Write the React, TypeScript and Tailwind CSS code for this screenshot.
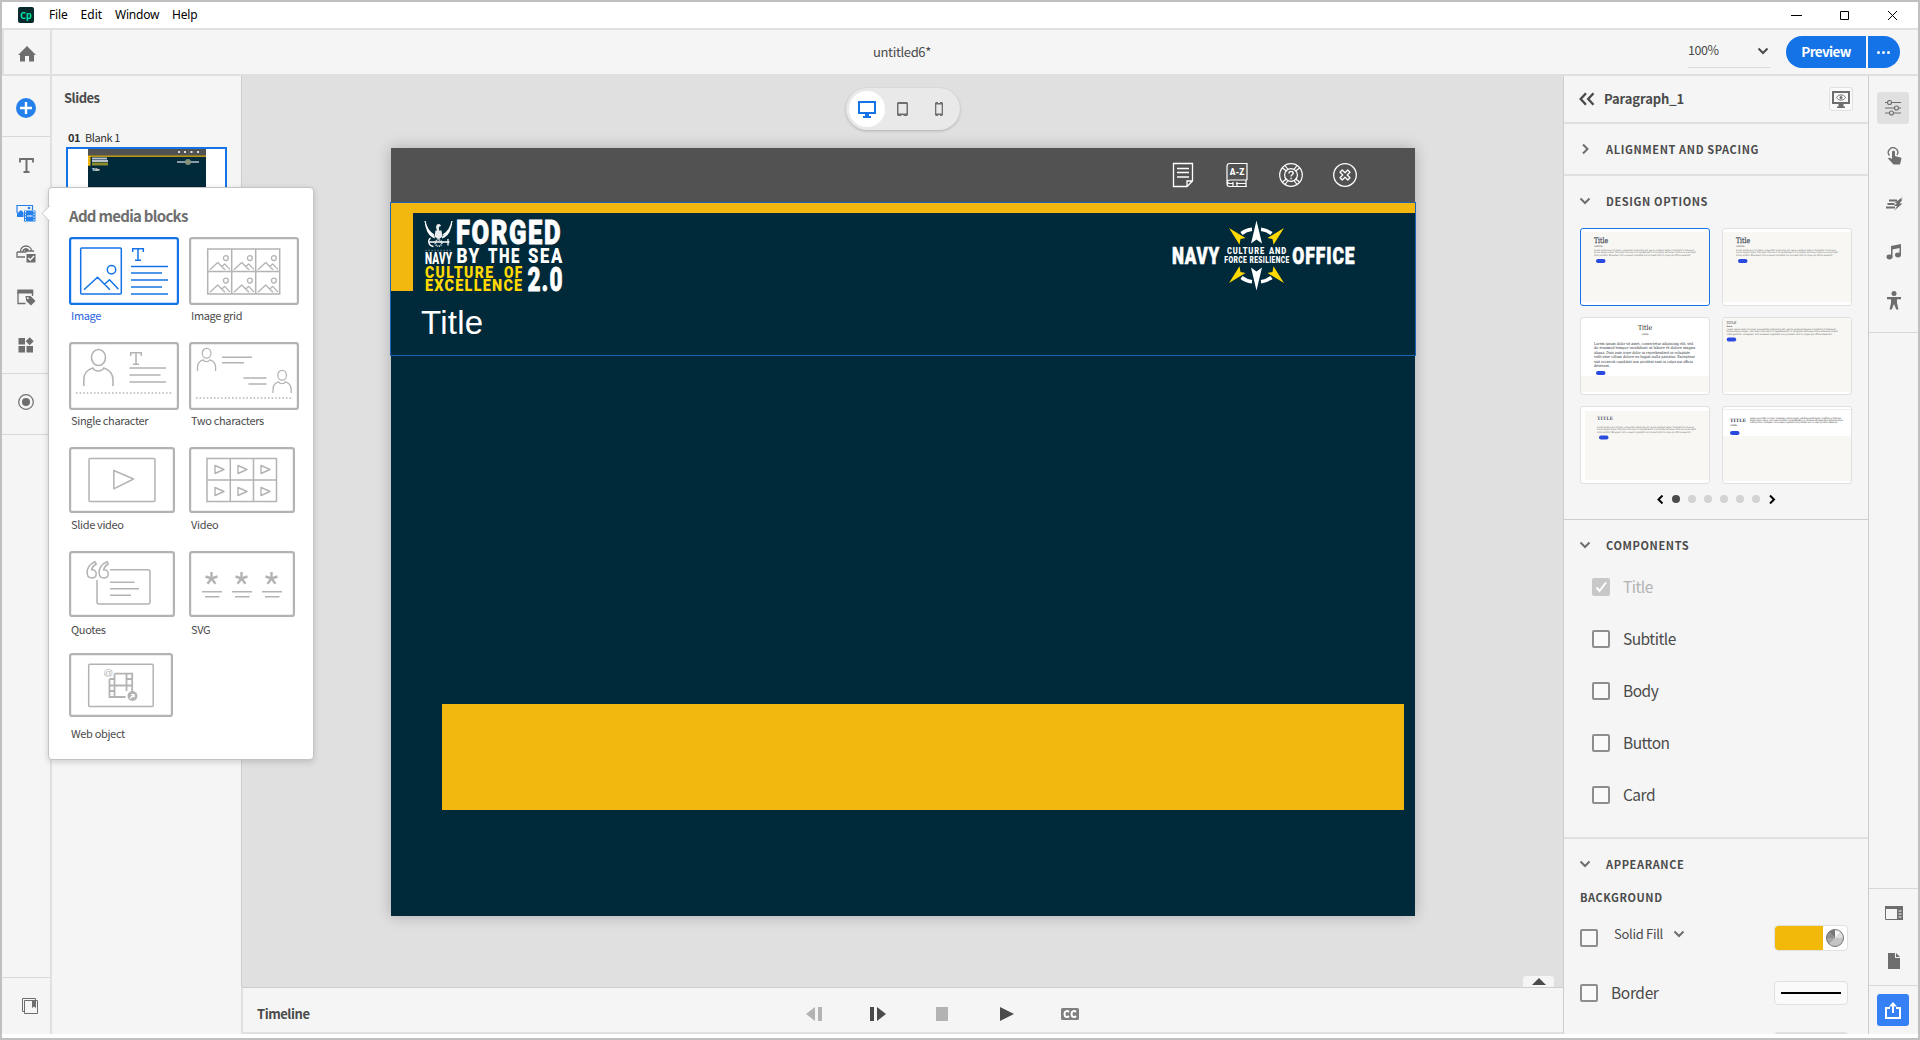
import type { ReactNode } from "react";

const LOREM = [
  "Lorem ipsum dolor sit amet, consectetur adipiscing elit, sed do eiusmod tempor incididunt ut labore et",
  "dolore magna aliqua. Duis aute irure dolor in reprehenderit in voluptate velit esse cillum dolore eu fugiat",
  "nulla pariatur. Excepteur sint occaecat cupidatat non proident sunt in culpa qui officia deserunt.",
];

const LOREM_WIDE = [
  "Lorem ipsum dolor sit amet, consectetur adipiscing elit, sed",
  "do eiusmod tempor incididunt ut labore et dolore magna",
  "aliqua. Duis aute irure dolor in reprehenderit in voluptate",
  "velit esse cillum dolore eu fugiat nulla pariatur. Excepteur",
  "sint occaecat cupidatat non proident sunt in culpa qui officia",
  "deserunt.",
];

/* ---------- Small shared pieces ---------- */

function Chevron({ dir = "down", color = "#6e6e6e" }: { dir?: "down" | "right"; color?: string }) {
  return (
    <svg width="12" height="12" viewBox="0 0 12 12" fill="none" stroke={color} strokeWidth="2">
      {dir === "down" ? <path d="M1.5 3.5 6 8l4.500-4.500" /> : <path d="M4 1.500 8.500 6 4 10.500" />}
    </svg>
  );
}

function SectionTitle({ children, dir = "down" }: { children: ReactNode; dir?: "down" | "right" }) {
  return (
    <div className="flex h-4 items-center gap-[15px] pl-[15px]">
      <Chevron dir={dir} />
      <span className="text-[11px] leading-4 font-bold tracking-[0.62px] whitespace-nowrap text-[#4b4b4b]">{children}</span>
    </div>
  );
}

function Check({ on = false }: { on?: boolean }) {
  return on ? (
    <span className="flex size-[18px] items-center justify-center rounded-[2px] bg-[#c8c8c8]">
      <svg width="14" height="14" viewBox="0 0 14 14" fill="none" stroke="#fff" strokeWidth="2">
        <path d="M2.500 7.500 5.500 11 12 2.500" />
      </svg>
    </span>
  ) : (
    <span className="size-[18px] rounded-[2px] border-2 border-[#8e8e8e] bg-[#fafafa]" />
  );
}

/* ---------- Media block thumbnails ---------- */

const G = "#b3b3b3";

function Mountain({ x, y, s = 1, color = G, w = 1.5 }: { x: number; y: number; s?: number; color?: string; w?: number }) {
  return (
    <g transform={`translate(${x} ${y}) scale(${s})`} fill="none" stroke={color} strokeWidth={w / s} strokeLinejoin="round" strokeLinecap="round">
      <path d="M0 24 13 12 25 24M20 19l5-4.500 8.500 9" />
      <circle cx="27" cy="4.500" r="4.200" />
    </g>
  );
}

function Person({ x, y, s = 1 }: { x: number; y: number; s?: number }) {
  return (
    <g transform={`translate(${x} ${y}) scale(${s})`} fill="none" stroke={G} strokeWidth={1.6 / Math.sqrt(s)}>
      <ellipse cx="15.500" cy="8.500" rx="7" ry="8" />
      <path d="M.8 37v-6c0-7 3-10 9-12 2 4 9 4 11 0 6 2 9.200 5 9.200 12v6" />
    </g>
  );
}

function Serif({ x, y, color = G }: { x: number; y: number; color?: string }) {
  return <path transform={`translate(${x} ${y})`} d="M.7 4V.7h10.600V4M6 .7v11.600M3 12.300h6" fill="none" stroke={color} strokeWidth="1.5" />;
}

function Frame({ w, h, color = G, children }: { w: number; h: number; color?: string; children: ReactNode }) {
  return (
    <svg width={w} height={h} viewBox={`0 0 ${w} ${h}`} className="block">
      <rect x="1.100" y="1.100" width={w - 2.2} height={h - 2.2} rx="2" fill="#fff" stroke={color} strokeWidth="2.200" />
      {children}
    </svg>
  );
}

const BLUE = "#1473e6";

function ImageThumb() {
  return (
    <Frame w={110} h={68} color={BLUE}>
      <rect x="11.700" y="11" width="40.600" height="46" rx="1" fill="none" stroke={BLUE} strokeWidth="1.500" />
      <Mountain x={15.5} y={28.300} color={BLUE} />
      <Serif x={63} y={11} color={BLUE} />
      <path d="M62 29.500h37M62 36h31M62 43h37M62 50h31M62 57h37" stroke={BLUE} strokeWidth="1.500" />
    </Frame>
  );
}

function ImageGridThumb() {
  return (
    <Frame w={110} h={68}>
      <path d="M18.700 12h72v45h-72zM18.700 34.500h72M42.700 12v45M66.700 12v45" fill="none" stroke={G} strokeWidth="1.500" />
      {[12, 34.5].map((y) => [18.7, 42.7, 66.7].map((x) => <Mountain key={`${x}-${y}`} x={x + 2.500} y={y + 6.500} s={0.58} w={1.3} />))}
    </Frame>
  );
}

function SingleThumb() {
  return (
    <Frame w={110} h={68}>
      <Person x={14} y={7} />
      <Serif x={61} y={10} />
      <path d="M60.500 26h36.500M60.500 33h31M60.500 40h36.500" stroke={G} strokeWidth="1.500" />
      <path d="M7 51h97" stroke={G} strokeWidth="1.300" strokeDasharray="1.500 2.100" />
    </Frame>
  );
}

function TwoThumb() {
  return (
    <Frame w={110} h={68}>
      <Person x={8} y={6} s={0.62} />
      <Person x={83.500} y={28} s={0.62} />
      <path d="M33 15.200h30M33 20.700h22M54.500 36h23M59.500 42h18" stroke={G} strokeWidth="1.500" />
      <path d="M7 56h97" stroke={G} strokeWidth="1.300" strokeDasharray="1.500 2.100" />
    </Frame>
  );
}

function SlideVideoThumb() {
  return (
    <Frame w={106} h={66}>
      <rect x="20" y="11.500" width="66" height="43" rx="1" fill="none" stroke={G} strokeWidth="1.500" />
      <path d="M44.800 23.500 64.500 32 44.800 41.800z" fill="none" stroke={G} strokeWidth="1.500" strokeLinejoin="round" />
    </Frame>
  );
}

function VideoThumb() {
  return (
    <Frame w={106} h={66}>
      <path d="M18 11.500h69.500v43H18zM18 33h69.500M41.300 11.500v43M64.500 11.500v43" fill="none" stroke={G} strokeWidth="1.500" />
      {[22, 44].map((y) =>
        [26, 49, 72].map((x) => (
          <path key={`${x}-${y}`} d={`M${x} ${y - 3.500}l9 4-9 4z`} fill="none" stroke={G} strokeWidth="1.400" strokeLinejoin="round" />
        )),
      )}
    </Frame>
  );
}

function QuotesThumb() {
  return (
    <Frame w={106} h={66}>
      <path d="M41 18.700h38a2 2 0 0 1 2 2V51a2 2 0 0 1-2 2H30a2 2 0 0 1-2-2V29" fill="none" stroke={G} strokeWidth="1.500" />
      {[18, 30].map((x) => (
        <path
          key={x}
          transform={`translate(${x} 10)`}
          d="M8 .8C2 3.500-.2 8 .2 12.500c.3 3 2 4.500 4.600 4.500s4.400-1.800 4.400-4.300S7.500 8.500 4.600 8.800C5 6.500 6.500 4.500 9.200 3z"
          fill="none"
          stroke={G}
          strokeWidth="1.500"
        />
      ))}
      <path d="M41 31.200h24.500M41 37.700h29M41 44.300h21" stroke={G} strokeWidth="1.500" />
    </Frame>
  );
}

function SvgThumb() {
  return (
    <Frame w={106} h={66}>
      {[22.500, 52.500, 82.500].map((x) => (
        <g key={x} transform={`translate(${x} 27)`} stroke={G}>
          <path d="M0 .5V-6M0 .5-6-1.500M0 .5 6-1.500M0 .5l-4 5.200M0 .5l4 5.200" strokeWidth="2.400" />
          <path d="M-9.500 13.700h20M-6.500 18.700H8" strokeWidth="1.500" />
        </g>
      ))}
    </Frame>
  );
}

function WebThumb() {
  return (
    <Frame w={104} h={64}>
      <rect x="19.700" y="11.300" width="64.500" height="42.200" rx="1" fill="none" stroke={G} strokeWidth="1.500" />
      <path d="M40.500 26v18h16M45.500 20.700h17.700V40M45.500 20.700V44M57.500 20.700V38M40.500 32.500h23M40.500 26h5M40.500 38h5M57.500 26h6" fill="none" stroke={G} strokeWidth="1.800" />
      <circle cx="63.500" cy="43" r="5" fill={G} />
      <path d="m61 45.500 4-4m-3 0h3v3" fill="none" stroke="#fff" strokeWidth="1.200" />
      <text x="34.500" y="22.500" fontSize="9.500" fill={G} fontFamily="Liberation Sans">@</text>
    </Frame>
  );
}

function Block({ label, active = false, children }: { label: string; active?: boolean; children: ReactNode }) {
  return (
    <div className="flex w-[110px] flex-col">
      {children}
      <span className={`mt-auto mb-[2px] pl-[2px] text-[11px] leading-4 tracking-[-0.34px] whitespace-nowrap ${active ? "text-[#2a62e0]" : "text-[#4b4b4b]"}`}>{label}</span>
    </div>
  );
}

function MediaPopup() {
  return (
    <div className="absolute top-[185px] left-[46px] z-20 h-[573px] w-[266px] rounded-[4px] border border-[#c4c4c4] bg-white pl-5 shadow-[0_2px_6px_rgba(0,0,0,0.16)]">
      <svg className="absolute top-[17px] -left-[8px]" width="9" height="17" viewBox="0 0 9 17">
        <path d="M9 .5 1 8.500l8 8" fill="#fff" stroke="#c4c4c4" />
      </svg>
      <h2 className="mt-[18px] h-[31px] text-[15px] leading-5 font-bold tracking-[-0.72px] whitespace-nowrap text-[#6e6e6e]">Add media blocks</h2>
      <div className="grid grid-cols-[110px_110px] grid-rows-[88px_88px_87px_88px_87px] gap-x-[10px] gap-y-[17px]">
        <Block label="Image" active><ImageThumb /></Block>
        <Block label="Image grid"><ImageGridThumb /></Block>
        <Block label="Single character"><SingleThumb /></Block>
        <Block label="Two characters"><TwoThumb /></Block>
        <Block label="Slide video"><SlideVideoThumb /></Block>
        <Block label="Video"><VideoThumb /></Block>
        <Block label="Quotes"><QuotesThumb /></Block>
        <Block label="SVG"><SvgThumb /></Block>
        <div className="-mt-[3px] flex h-[90px]"><Block label="Web object"><WebThumb /></Block></div>
      </div>
    </div>
  );
}

/* ---------- Logos ---------- */

const BLOCK_FONT = { fontFamily: "Roboto, 'Liberation Sans', sans-serif", fontWeight: 900 } as const;

function Word({ x, y, w, size, fill = "#fff", stroke = 0, gap = 1, children }: { x: number; y: number; w: number; size: number; fill?: string; stroke?: number; gap?: number; children: string }) {
  return (
    <text x={x} y={y} textLength={w + gap} lengthAdjust="spacingAndGlyphs" fontSize={size} letterSpacing={gap} fill={fill} stroke={fill} strokeWidth={stroke} style={BLOCK_FONT}>
      {children}
    </text>
  );
}

function ForgedLogo() {
  return (
    <svg width="140" height="74" viewBox="0 0 140 74" className="block overflow-visible">
      <g fill="none" stroke="#fff">
        <path d="M1 1c1 6 4 11 9 14M1.500 4c1 6 4 10 9 13M3 9c1 4 4 7 8 9M28 1c-1 6-4 11-9 14M27.500 4c-1 6-4 10-9 13M26 9c-1 4-4 7-8 9" strokeWidth="1.300" />
        <path d="M4.500 22h21M6.500 18c-3.500 3-1.500 8 3 8.500M24 19v6.500" strokeWidth="1.300" />
      </g>
      <path d="M12 7.500c0-4 4-4.500 5-1.500l-2 1v3.500h2.500l1 6-4 3-4-3 1-6h1.500z" fill="#fff" opacity=".9" />
      <circle cx="14.500" cy="23" r="3.200" fill="none" stroke="#fff" strokeWidth="1.800" strokeDasharray="1 .7" opacity=".8" />
      <path d="M1.500 30.500h27" stroke="#fff" strokeWidth="1.500" strokeDasharray="1.200 1.800" opacity=".4" />
      <Word x={1} y={43.700} w={27} size={16.800} gap={0.3}>NAVY</Word>
      <Word x={32} y={24} w={104} size={33} stroke={0.8} gap={2}>FORGED</Word>
      <Word x={32.500} y={43.300} w={22.500} size={19.700} gap={1.500}>BY</Word>
      <Word x={64} y={43.300} w={31} size={19.700} gap={2}>THE</Word>
      <Word x={104} y={43.300} w={34} size={19.700} gap={2}>SEA</Word>
      <Word x={1} y={58} w={68} size={16} gap={1.600} fill="#ffd900">CULTURE</Word>
      <Word x={80} y={58} w={18} size={16} gap={1.500} fill="#ffd900">OF</Word>
      <Word x={1} y={71} w={97} size={16} gap={1.400} fill="#ffd900">EXCELLENCE</Word>
      <Word x={103.500} y={70.500} w={34.500} size={33.500} stroke={0.8} gap={1.500}>2.0</Word>
    </svg>
  );
}

function OfficeLogo() {
  return (
    <svg width="184" height="74" viewBox="0 0 184 74" className="block overflow-visible">
      {[false, true].map((flip) => (
        <g key={String(flip)} transform={flip ? "translate(0 71) scale(1 -1)" : undefined}>
          <path d="M84.500 .5 90 23.500 84.500 19.500 79 23.500z" fill="#fff" />
          <path d="M57 8 73.500 18 68.500 19 67.500 24.800zM112 8 95.500 18l5 1 1 5.800z" fill="#ffd900" />
          <path d="M69.500 13.500Q74 10 80 9.300M99.500 13.500Q95 10 89 9.300" fill="none" stroke="#fff" strokeWidth="3.500" />
        </g>
      ))}
      <Word x={0} y={44.300} w={47} size={23} stroke={0.6} gap={1}>NAVY</Word>
      <Word x={55} y={34.300} w={37} size={9} gap={1}>CULTURE</Word>
      <Word x={97} y={34.300} w={17} size={9} gap={1}>AND</Word>
      <Word x={52.300} y={43} w={22.500} size={9} gap={0.500}>FORCE</Word>
      <Word x={77.500} y={43} w={39.500} size={9} gap={0.500}>RESILIENCE</Word>
      <Word x={120.300} y={44.300} w={62} size={23} stroke={0.6} gap={1.200}>OFFICE</Word>
    </svg>
  );
}

/* ---------- Slide ---------- */

function SlideToolbar() {
  return (
    <div className="flex h-[54px] items-center gap-[29px] bg-[#525252] pl-[780px]">
      <svg width="24" height="26" viewBox="0 0 24 26" fill="none" stroke="#fff" strokeWidth="1.300">
        <path d="M2.500 1.500h19v17.500l-5.500 5.500H2.500zM16 24v-5h5.500M6 6.500h12M6 10.500h12M6 15h12" />
      </svg>
      <svg width="26" height="26" viewBox="0 0 26 26" fill="none" stroke="#fff" strokeWidth="1.200">
        <path d="M23 18V1.500H5.500c-1.500 0-2.500 1-2.500 3v17c0 2 1 3 2.500 3H23M23 18H6c-3.500 0-3.500 3.500 0 3.500h3M12 21.500h10M22 18v6M9 20v5M13 20v5" />
        <text x="5.800" y="12.800" fontSize="8.500" fill="#fff" stroke="none" textLength="14.500" lengthAdjust="spacingAndGlyphs" style={BLOCK_FONT}>A-Z</text>
      </svg>
      <svg width="26" height="26" viewBox="0 0 26 26" fill="none" stroke="#fff" strokeWidth="1.200" className="-ml-px">
        <circle cx="13" cy="13" r="11.300" />
        <circle cx="13" cy="13" r="6.400" />
        <path d="m4.500 6 4.200 3.300M7 3.500l3 4M21.500 6l-4.200 3.300M19 3.500l-3 4M4.500 20l4.200-3.300M7 22.500l3-4M21.500 20l-4.200-3.300M19 22.500l-3-4" />
        <path d="M11 11.500c0-2.800 4.200-2.800 4.200-.2 0 1.500-2.100 1.500-2.100 3.200M13.100 15.700v1.600" strokeWidth="1.400" />
      </svg>
      <svg width="26" height="26" viewBox="0 0 26 26" fill="none" stroke="#fff" strokeWidth="1.300" className="-ml-px">
        <circle cx="13" cy="13" r="11.300" />
        <path d="m10.200 8 2.800 2.800L15.800 8 18 10.200 15.200 13l2.800 2.800-2.200 2.200-2.800-2.800-2.800 2.800L8 15.800l2.800-2.800L8 10.200z" strokeLinejoin="round" />
      </svg>
    </div>
  );
}

function Slide() {
  return (
    <div className="mt-[18px] ml-[149px] h-[768px] w-[1024px] bg-[#00293a] shadow-[0_0_14px_rgba(0,0,0,0.24)]">
      <SlideToolbar />
      <div className="-ml-px h-[154px] w-[1026px] border border-[#1a63b5]">
        <div className="h-[10px] bg-[#f2b80f]" />
        <div className="flex">
          <div className="h-[78px] w-[22px] bg-[#f2b80f]" />
          <div className="mt-[7px] ml-[11px]"><ForgedLogo /></div>
          <div className="mt-[7px] ml-[608px]"><OfficeLogo /></div>
        </div>
        <div className="mt-[11px] ml-[30px] font-['Liberation_Sans',Arial,sans-serif] text-[33px] leading-9 tracking-[0.25px] text-white">Title</div>
      </div>
      <div className="mt-[348px] ml-[51px] h-[106px] w-[962px] bg-[#f2b80f]" />
    </div>
  );
}

function DeviceSwitch() {
  return (
    <div className="mt-3 ml-[604px] flex h-[42px] w-[114px] items-center rounded-full bg-[#e9e9e9] pl-[3px] shadow-[0_1px_3px_rgba(0,0,0,0.22)]">
      <div className="flex size-9 items-center justify-center rounded-full bg-white">
        <svg width="18" height="18" viewBox="0 0 18 18" fill={BLUE}>
          <path fillRule="evenodd" d="M0 1h18v13h-7v2h2v2H5v-2h2v-2H0zM2 3v9h14V3z" />
        </svg>
      </div>
      <svg className="ml-3" width="11" height="14" viewBox="0 0 11 14">
        <path fillRule="evenodd" fill="#6e6e6e" d="M1 0h9l1 1v12l-1 1H6.500v-1h-2v1H1l-1-1V1zM1.500 2v9.500h8V2z" />
      </svg>
      <svg className="ml-[27px]" width="8" height="14" viewBox="0 0 8 14">
        <path fillRule="evenodd" fill="#6e6e6e" d="M1 0h2v1h2V0h2l1 1v12l-1 1H5v-1H3v1H1l-1-1V1zM1.300 2.500v9h5.400v-9z" />
      </svg>
    </div>
  );
}

/* ---------- Left side ---------- */

function LeftRail() {
  return (
    <nav className="flex w-[50px] flex-col border-r-2 border-[#e0e0e0] bg-[#f5f5f5]">
      <div className="flex h-[61px] items-center justify-center border-b border-[#d8d8d8] pt-1">
        <svg width="20" height="20" viewBox="0 0 20 20"><circle cx="10" cy="10" r="10" fill="#2680eb" /><path d="M10 4v12M4 10h12" stroke="#fff" strokeWidth="2.400" /></svg>
      </div>
      <div className="flex h-14 items-center justify-center">
        <svg width="15" height="15" viewBox="0 0 15 15" fill="none" stroke="#6e6e6e"><path d="M1 4.500V1h13v3.500" strokeWidth="1.800" /><path d="M7.500 1v13M4.500 14h6" strokeWidth="2" /></svg>
      </div>
      <div className="flex h-10 items-center justify-center">
        <svg width="20" height="18" viewBox="0 0 20 18">
          <path d="M1 9V1.500h15.500V6" fill="none" stroke="#2680eb" strokeWidth="1.200" />
          <path d="M1 9.500 5 6l2.500 2.500V13H1z" fill="#2680eb" />
          <circle cx="13" cy="4" r="1.300" fill="#2680eb" />
          <rect x="8" y="6.500" width="11.500" height="11" fill="#2680eb" />
          <path d="M9.500 7v10M18 7v10" stroke="#fff" strokeWidth="1" strokeDasharray="1.500 1.200" />
          <path d="M11 12h5.500" stroke="#fff" strokeWidth="1" />
        </svg>
      </div>
      <div className="flex h-[42px] items-center justify-center">
        <svg width="20" height="18" viewBox="0 0 20 18" fill="none" stroke="#6e6e6e" strokeWidth="1.300">
          <path d="M4.500 6.500C4.500 3 7 1 10 1s5.500 2 5.500 5M7 7c0-2 1.300-3 3-3s2.500 1 2.500 2.500M1 7h9.500M1 7v5h8M18 6H10" />
          <circle cx="10" cy="4.800" r="1" fill="#6e6e6e" />
          <rect x="10.500" y="9" width="9" height="8.500" fill="#6e6e6e" stroke="none" />
          <path d="m12.300 13 2 2 3.700-4" stroke="#fff" />
        </svg>
      </div>
      <div className="flex h-11 items-center justify-center">
        <svg width="20" height="18" viewBox="0 0 20 18">
          <path d="M2 4v11.500h7.500M16.500 4v4" fill="none" stroke="#6e6e6e" strokeWidth="1.300" /><path d="M1.300 1.500h16v4h-16z" fill="#6e6e6e" />
          <path d="M9.500 8h5l5 5-4.500 4.500L10.200 13z" fill="#6e6e6e" /><circle cx="11.800" cy="10.200" r=".9" fill="#fff" />
        </svg>
      </div>
      <div className="flex h-[54px] items-center justify-center pb-0.5">
        <svg width="16" height="16" viewBox="0 0 16 16" fill="#6e6e6e"><path d="M.5 1h6.500v6.500H.5zM.5 9H7v6.500H.5zM8.500 9H15v6.500H8.500zM11.700.2 15.700 4.200 11.700 8.200 7.700 4.200z" /></svg>
      </div>
      <div className="flex h-[62px] items-center justify-center border-y border-[#d8d8d8] pb-1">
        <svg width="16" height="16" viewBox="0 0 16 16"><circle cx="8" cy="8" r="7.300" fill="none" stroke="#6e6e6e" strokeWidth="1.200" /><circle cx="8" cy="8" r="4" fill="#6e6e6e" /></svg>
      </div>
      <div className="mt-auto flex h-[57px] items-center justify-center border-t border-[#d8d8d8] pl-2">
        <svg width="16" height="16" viewBox="0 0 16 16" fill="none" stroke="#6e6e6e"><path d="M2 13.500H.5V.5h13V2" /><path d="M2.500 2.500h13v13h-13z" /><path d="M10 2.500h4V10l-2-1.500L10 10z" fill="#6e6e6e" stroke="none" /></svg>
      </div>
    </nav>
  );
}

function SlidesPanel() {
  return (
    <aside className="w-[190px] border-r border-[#cdcdcd] bg-[#f5f5f5]">
      <h2 className="mt-[14px] ml-3 text-[13px] leading-4 font-bold tracking-[-0.5px] text-[#4b4b4b]">Slides</h2>
      <div className="mt-[23px] ml-4 flex gap-[5px] text-[11px] leading-4 tracking-[-0.45px] whitespace-nowrap text-[#323232]"><b>01</b><span>Blank 1</span></div>
      <div className="mt-[2px] ml-[14px] flex h-[98px] w-[161px] justify-center border-2 border-[#1473e6] bg-white">
        <svg width="118" height="94" viewBox="0 0 118 94">
          <rect width="118" height="94" fill="#00293a" />
          <rect width="118" height="6.500" fill="#525252" />
          <path d="M0 6.500h118v1.200H2.500v9H0z" fill="#f2b80f" />
          <path d="M90 3h2M96 3h2M102.500 3h2M109 3h2" stroke="#ddd" strokeWidth="2" />
          <path d="M4 9.500h15M4 12h16" stroke="#b8c2c8" strokeWidth="1.800" /><path d="M4 15h16" stroke="#8d8c2c" strokeWidth="3" />
          <path d="M89 13h22" stroke="#b8c2c8" strokeWidth="1.500" /><circle cx="100" cy="13" r="3" fill="#83907a" />
          <text x="4" y="21.500" fontSize="4" fill="#fff" stroke="#fff" strokeWidth=".2" fontFamily="Liberation Sans">Title</text>
        </svg>
      </div>
    </aside>
  );
}

/* ---------- Timeline ---------- */

function Timeline() {
  return (
    <footer className="-ml-px flex h-[47px] items-center border-t border-b-2 border-l-2 border-t-[#cdcdcd] border-b-[#e0e0e0] border-l-[#e0e0e0] bg-[#f5f5f5] pt-[7px] pl-[14px]">
      <span className="w-[549px] text-[13px] leading-5 font-bold tracking-[-0.45px] text-[#4b4b4b]">Timeline</span>
      <svg width="16" height="14" viewBox="0 0 16 14" fill="#b3b3b3"><path d="M0 7 9 0v14zM12 0h4v14h-4z" /></svg>
      <svg className="ml-12" width="16" height="14" viewBox="0 0 16 14" fill="#4b4b4b"><path d="M0 0h4v14H0zM7 0l9 7-9 7z" /></svg>
      <svg className="ml-[50px]" width="12" height="14" viewBox="0 0 12 14" fill="#b3b3b3"><path d="M0 0h12v14H0z" /></svg>
      <svg className="ml-[52px]" width="14" height="14" viewBox="0 0 14 14" fill="#4b4b4b"><path d="M0 0 14 7 0 14z" /></svg>
      <svg className="ml-[47px]" width="18" height="12" viewBox="0 0 18 12">
        <rect width="18" height="12" rx="1.500" fill="#808080" />
        <path d="M8 4C6.500 2.200 3.500 2.700 3.500 6S6.500 9.800 8 8M15 4c-1.500-1.800-4.500-1.300-4.500 2s3 3.800 4.500 2" fill="none" stroke="#fff" strokeWidth="2" />
      </svg>
    </footer>
  );
}

/* ---------- Design option previews ---------- */

const SERIF = "'DejaVu Serif', 'Liberation Serif', serif";

function Lines({ x, y, w, step = 2.5, size = 2.4, fill = "#555", rows = LOREM }: { x: number; y: number; w: number; step?: number; size?: number; fill?: string; rows?: string[] }) {
  return (
    <g fontFamily={SERIF} fontSize={size} fill={fill}>
      {rows.map((row, i) => (
        <text key={row} x={x} y={y + i * step} textLength={row.length < 20 ? 16 : w - (i % 3 === 2 ? 5 : i % 2 === 0 ? 2 : 0)} lengthAdjust="spacingAndGlyphs">{row}</text>
      ))}
    </g>
  );
}

function Pill({ x, y }: { x: number; y: number }) {
  return <rect x={x} y={y} width="9.500" height="4" rx="2" fill="#2a4ae0" />;
}

function Option({ active = false, children }: { active?: boolean; children: ReactNode }) {
  return (
    <div className={`h-[78px] w-[130px] overflow-hidden rounded-[3px] border bg-white ${active ? "border-[#1473e6]" : "border-[#e0e0e0]"}`}>
      <svg width="128" height="76" viewBox="0 0 128 76">{children}</svg>
    </div>
  );
}

function StandardPreview() {
  return (
    <>
      <rect y="3" width="128" height="70" fill="#f8f7f3" />
      <text x="13" y="13.500" fontSize="7.500" fontFamily={SERIF} fill="#475060" stroke="#475060" strokeWidth=".25" textLength="14" lengthAdjust="spacingAndGlyphs">Title</text>
      <text x="13" y="18" fontSize="2.200" fontFamily={SERIF} fill="#333" textLength="8.500">Subtitle</text>
      <Lines x={13} y={21.500} w={102} />
      <Pill x={15} y={30} />
    </>
  );
}

function DesignOptions() {
  return (
    <div className="mt-[19px] ml-4 grid grid-cols-[130px_130px] gap-x-3 gap-y-[11px]">
      <Option active><StandardPreview /></Option>
      <Option><StandardPreview /></Option>
      <Option>
        <rect y="58" width="128" height="16" fill="#f8f7f3" />
        <text x="57" y="11.500" fontSize="7" fontFamily={SERIF} fill="#222" textLength="14" lengthAdjust="spacingAndGlyphs">Title</text>
        <text x="60.500" y="16.500" fontSize="2.200" fontFamily={SERIF} fill="#444" textLength="7">Subtitle</text>
        <Lines x={13} y={26.800} w={101} step={4.500} size={4} fill="#2f3642" rows={LOREM_WIDE} />
        <Pill x={15} y={53} />
      </Option>
      <Option>
        <rect width="128" height="74" fill="#f8f7f3" />
        <text x="3.500" y="5.500" fontSize="3.300" fontFamily={SERIF} fill="#333" textLength="10">TITLE</text>
        <text x="3.500" y="9" fontSize="2" fontFamily={SERIF} fill="#222" textLength="6">Subtitle</text>
        <Lines x={3.500} y={12} w={111} step={2.300} size={2.200} />
        <Pill x={3.700} y={19.500} />
      </Option>
      <Option>
        <rect x="4" y="4" width="124" height="69" fill="#f8f7f3" />
        <text x="16" y="13" fontSize="4.600" fontFamily={SERIF} fontWeight="bold" fill="#596373" textLength="16" lengthAdjust="spacingAndGlyphs">TITLE</text>
        <Lines x={16} y={20.500} w={99} />
        <Pill x={18} y={28.500} />
      </Option>
      <Option>
        <path d="M0 2.500h128" stroke="#e8e8e8" strokeWidth=".7" />
        <rect y="29" width="128" height="45" fill="#f8f7f3" />
        <text x="7" y="15" fontSize="4.600" fontFamily={SERIF} fontWeight="bold" fill="#444c58" textLength="16" lengthAdjust="spacingAndGlyphs">TITLE</text>
        <text x="7" y="18.500" fontSize="2.200" fontFamily={SERIF} fill="#333" textLength="7">Subtitle</text>
        <Lines x={27} y={12} w={93} size={2.500} step={2} fill="#111" />
        <Pill x={7} y={24} />
      </Option>
    </div>
  );
}

/* ---------- Properties panel ---------- */

function PropertiesPanel() {
  return (
    <aside className="flex w-[306px] flex-col border-x border-[#cdcdcd] bg-[#f5f5f5]">
      <div className="flex h-12 items-center border-b-2 border-[#e0e0e0] pl-[15px]">
        <svg width="16" height="14" viewBox="0 0 16 14" fill="none" stroke="#4b4b4b" strokeWidth="2.400"><path d="M7 1.200 1.700 7 7 12.800M14.500 1.200 9.200 7l5.300 5.800" /></svg>
        <span className="ml-[9px] w-[225px] text-[13px] leading-5 font-bold tracking-[-0.1px] text-[#4b4b4b]">Paragraph_1</span>
        <span className="flex size-6 items-center justify-center rounded-[3px] border border-[#e0e0e0] bg-[#fafafa]">
          <svg width="18" height="18" viewBox="0 0 18 18" className="block shrink-0">
            <path fillRule="evenodd" fill="#6e6e6e" d="M0 1h18v13h-6.500v2.500H13V18H5v-1.500h1.500V14H0zM2 3v9h14V3z" />
            <path d="M4.500 7.500C6.500 4 11.500 4 13.500 7.500 11.500 11 6.500 11 4.500 7.500z" fill="none" stroke="#6e6e6e" /><circle cx="9" cy="7.500" r="1.500" fill="#6e6e6e" />
          </svg>
        </span>
      </div>
      <div className="flex h-[52px] flex-col justify-center border-b-2 border-[#e0e0e0] pb-px"><SectionTitle dir="right">ALIGNMENT AND SPACING</SectionTitle></div>
      <section className="h-[344px] border-b border-[#cdcdcd] pt-[17px]">
        <SectionTitle>DESIGN OPTIONS</SectionTitle>
        <DesignOptions />
        <div className="mt-[10px] flex h-[10px] items-center gap-2 pl-[92px]">
          <svg width="8" height="9" viewBox="0 0 8 9" fill="none" stroke="#000" strokeWidth="2"><path d="M6.500.5 2.500 4.500l4 4" /></svg>
          <span className="size-2 rounded-full bg-[#4b4b4b]" />
          {[1, 2, 3, 4, 5].map((n) => <span key={n} className="size-2 rounded-full bg-[#d3d3d3]" />)}
          <svg width="8" height="9" viewBox="0 0 8 9" fill="none" stroke="#000" strokeWidth="2"><path d="m2 .5 4 4-4 4" /></svg>
        </div>
      </section>
      <section className="h-[319px] border-b-2 border-[#e0e0e0] pt-[17px]">
        <SectionTitle>COMPONENTS</SectionTitle>
        <div className="mt-2 flex flex-col pl-7">
          {["Title", "Subtitle", "Body", "Button", "Card"].map((name, i) => (
            <label key={name} className="flex h-[52px] items-center gap-[13px]">
              <Check on={i === 0} />
              <span className={`-mt-[3px] text-[15.500px] leading-5 tracking-[-0.52px] ${i === 0 ? "text-[#b3b3b3]" : "text-[#4b4b4b]"}`}>{name}</span>
            </label>
          ))}
        </div>
      </section>
      <section className="flex h-[195px] flex-col overflow-hidden pt-[17px]">
        <SectionTitle>APPEARANCE</SectionTitle>
        <h3 className="mt-[17px] ml-4 text-[11px] leading-4 font-bold tracking-[0.55px] text-[#4b4b4b]">BACKGROUND</h3>
        <div className="mt-[20px] flex h-[26px] items-center pl-4">
          <Check />
          <span className="-mt-[9px] ml-4 w-[59px] text-[13px] leading-5 tracking-[-0.3px] whitespace-nowrap text-[#4b4b4b]">Solid Fill</span>
          <span className="-mt-[9px] w-[101px]"><Chevron /></span>
          <span className="flex h-[26px] w-[74px] items-center overflow-hidden rounded-[4px] border border-[#e0e0e0] bg-white">
            <span className="h-6 w-12 shrink-0 rounded-l-[3px] bg-[#f2b80a]" />
            <svg className="ml-[3px] shrink-0" width="18" height="18" viewBox="0 0 18 18">
              <circle cx="9" cy="9" r="8.500" fill="#c4c4c4" />
              <path d="M9 9V.5a8.500 8.500 0 0 1 6 2.500z" fill="#f4f4f4" /><path d="M9 9 15 3a8.500 8.500 0 0 1 2.500 6z" fill="#dedede" />
              <path d="M9 9h-8.500a8.500 8.500 0 0 1 2.500-6z" fill="#8f8f8f" /><path d="M9 9 3 3A8.500 8.500 0 0 1 9 .5z" fill="#777" />
              <path d="M9 9 3 15A8.500 8.500 0 0 1 .5 9z" fill="#a5a5a5" />
              <circle cx="9" cy="9" r="8.500" fill="none" stroke="#777" />
            </svg>
          </span>
        </div>
        <div className="mt-[30px] flex h-6 items-center pl-4">
          <Check />
          <span className="-mt-[3px] ml-[13px] w-[163px] text-[15.500px] leading-5 tracking-[-0.35px] text-[#4b4b4b]">Border</span>
          <span className="flex h-6 w-[74px] items-center justify-center rounded-[4px] border border-[#e0e0e0] bg-[#fafafa]"><span className="h-[2px] w-[60px] bg-black" /></span>
        </div>
        <div className="mt-[27px] ml-[210px] h-6 w-[74px] shrink-0 rounded-[4px] bg-[#e0e0e0]" />
      </section>
    </aside>
  );
}

function RightRail() {
  return (
    <nav className="flex w-[49px] flex-col bg-[#f5f5f5] text-[#6e6e6e]">
      <div className="mt-4 ml-2 flex size-8 items-center justify-center rounded-[3px] bg-[#e0e0e0]">
        <svg width="16" height="16" viewBox="0 0 16 16" fill="#e0e0e0" stroke="#6e6e6e" strokeWidth="1.100">
          <path d="M0 2.500h16M0 8h16M0 13h16" /><circle cx="4.500" cy="2.500" r="2" /><circle cx="11.500" cy="8" r="2" /><circle cx="6.500" cy="13" r="2" />
        </svg>
      </div>
      <div className="flex h-16 items-center justify-center">
        <svg width="16" height="18" viewBox="0 0 16 18"><path d="M3.500 8.500A4.700 4.700 0 1 1 11 8" fill="none" stroke="#6e6e6e" strokeWidth="1.300" /><path d="M6 5c0-1.800 3-1.800 3 0v4l5.500 1.500c.8.300 1 1 .8 1.800L14 17.500H7.500L2 11.500c.5-1.300 2-.8 4 .5z" fill="#6e6e6e" /></svg>
      </div>
      <div className="flex h-8 items-center justify-center">
        <svg width="18" height="16" viewBox="0 0 18 16" fill="#6e6e6e"><path d="m17.500 1-8 6h2.500L9 10h3L9.500 14.500l8-7h-3l3-4h-1.500z" /><path d="M4 4.500h8M2.500 8h7M1 11.500h9" stroke="#6e6e6e" strokeWidth="1.900" /></svg>
      </div>
      <div className="mt-4 flex h-8 items-center justify-center">
        <svg width="16" height="18" viewBox="0 0 16 18" fill="#6e6e6e"><path d="M5 3 15 1v11h-1.500V5L6.500 6.500V14H5z" /><ellipse cx="3.500" cy="14" rx="3" ry="2.400" /><ellipse cx="12" cy="12" rx="3" ry="2.400" /></svg>
      </div>
      <div className="mt-4 flex h-[49px] justify-center border-b border-[#d8d8d8]">
        <svg className="mt-[7px]" width="16" height="19" viewBox="0 0 16 19" fill="#6e6e6e"><circle cx="8" cy="2.500" r="2.500" /><path d="M1 6h14v2.200h-4L11 12l1.500 6.500h-2.300L8 13l-2.200 5.500H3.500L5 12V8.200H1z" /></svg>
      </div>
      <div className="mt-auto flex h-[98px] flex-col items-center border-y border-[#d8d8d8] pt-[17px]">
        <svg width="18" height="14" viewBox="0 0 18 14"><path d="M.5.500h17v13H.5z" fill="none" stroke="#6e6e6e" /><path d="M0 0h18v3H0zM12 0h6v14h-6z" fill="#6e6e6e" /><path d="M13.500 5h3M13.500 8h3M13.500 11h3" stroke="#f5f5f5" /></svg>
        <svg className="mt-[33px]" width="12" height="16" viewBox="0 0 12 16" fill="#6e6e6e"><path d="M0 0h7v5h5v11H0zM8 0l4 4H8z" /></svg>
      </div>
      <div className="mt-2 mb-2 ml-2 flex size-8 items-center justify-center rounded-[3px] bg-[#3580f4]">
        <svg width="16" height="17" viewBox="0 0 16 17" fill="none" stroke="#fff" strokeWidth="2"><path d="M5 6H1v10h14V6h-4M8 11V2" /><path d="M8 0 4 4.500h8z" fill="#fff" stroke="none" /></svg>
      </div>
    </nav>
  );
}

/* ---------- Top bars ---------- */

function TitleBar() {
  return (
    <header className="flex h-7 items-center border-b-2 border-[#e0e0e0] bg-white pl-4 text-[12px] text-black">
      <span className="flex size-4 items-center justify-center rounded-[2px] bg-[#072b2c] text-[9px] leading-none font-bold text-[#00e5b0]">Cp</span>
      <div className="ml-[15px] flex gap-[13px] font-['Noto_Sans','Open_Sans',sans-serif] leading-4">
        <span className="tracking-[-0.15px]">File</span><span>Edit</span><span className="tracking-[-0.25px]">Window</span><span className="tracking-[-0.2px]">Help</span>
      </div>
      <svg className="mr-5 ml-auto" width="108" height="12" viewBox="0 0 108 12" fill="none" stroke="#000">
        <path d="M1 6.500h11M50.500 2.500h8v8h-8zM98 2l9 9M107 2l-9 9" />
      </svg>
    </header>
  );
}

function Toolbar() {
  return (
    <div className="flex h-[46px] items-center border-b-2 border-l-2 border-[#e0e0e0] bg-[#f5f5f5]">
      <div className="flex h-full w-12 items-center justify-center border-r-2 border-[#e0e0e0]">
        <svg width="18" height="16" viewBox="0 0 18 16" fill="#6e6e6e" className="mt-1"><path d="M9 0 18 9h-2v6.500h-5V10H7v5.500H2V9H0z" /></svg>
      </div>
      <div className="ml-[821px] w-[815px] text-[13px] leading-5 tracking-[-0.35px] text-[#4b4b4b]">untitled6*</div>
      <div className="mt-[2px] flex h-[30px] w-[82px] items-center justify-between border-b border-[#dadada] pr-[1px] pb-[4px] text-[12.500px] tracking-[-0.4px] text-[#4b4b4b]">100%<Chevron color="#4b4b4b" /></div>
      <div className="ml-4 flex h-8 gap-[2px]">
        <span className="flex w-20 items-center justify-center rounded-l-full bg-[#1473e6] pb-px text-[13.500px] font-bold tracking-[-0.65px] text-white">Preview</span>
        <span className="flex w-8 items-center justify-center gap-[2px] rounded-r-full bg-[#1473e6] pr-px">{[0, 1, 2].map((n) => <i key={n} className="size-[3px] rounded-full bg-white" />)}</span>
      </div>
    </div>
  );
}

export default function App() {
  return (
    <div className="relative flex h-[1040px] w-[1920px] flex-col overflow-hidden border-2 border-[#c0c0c0] bg-white pb-1 font-['Noto_Sans_CJK_JP','Noto_Sans',sans-serif]">
      <TitleBar />
      <Toolbar />
      <div className="flex min-h-0 flex-1">
        <LeftRail />
        <SlidesPanel />
        <main className="flex w-[1321px] flex-col bg-[#e0e0e0]">
          <div className="relative min-h-0 flex-1">
            <DeviceSwitch />
            <Slide />
            <div className="absolute right-[9px] bottom-0 flex h-[11px] w-[31px] items-center justify-center rounded-t-[3px] bg-[#f5f5f5]">
              <svg width="14" height="7" viewBox="0 0 14 7" fill="#4b4b4b"><path d="M7 0 14 7H0z" /></svg>
            </div>
          </div>
          <Timeline />
        </main>
        <PropertiesPanel />
        <RightRail />
      </div>
      <MediaPopup />
    </div>
  );
}
